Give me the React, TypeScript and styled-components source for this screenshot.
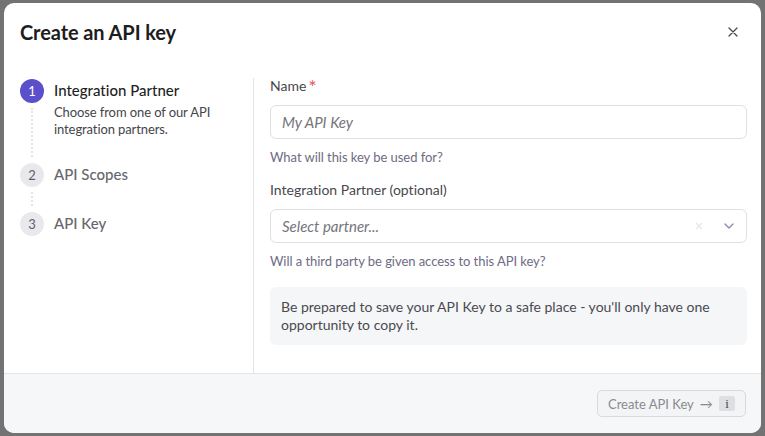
import React from 'react';
import styled, { createGlobalStyle } from 'styled-components';

const GlobalStyle = createGlobalStyle`
  html, body {
    margin: 0;
    padding: 0;
    background: #737373;
  }
  body {
    font-family: Lato, "Noto Sans", sans-serif;
    font-variant-ligatures: none;
    -webkit-font-smoothing: antialiased;
  }
`;

const STEPS = [
    { title: 'Integration Partner', description: 'Choose from one of our API integration partners.' },
    { title: 'API Scopes' },
    { title: 'API Key' },
];

const Backdrop = styled.div`
  width: 765px;
  height: 436px;
  display: flex;
  padding: 3px 4px 3px 4px;
  box-sizing: border-box;
  background: #737373;
`;

const Modal = styled.div`
  width: 757px;
  height: 430px;
  background: #fff;
  border-radius: 10px;
  overflow: hidden;
  display: flex;
  flex-direction: column;
`;

const Header = styled.div`
  height: 58px;
  padding: 0 23px 0 16px;
  display: flex;
  align-items: center;
  justify-content: space-between;
`;

const Title = styled.h2`
  margin: 0;
  font-size: 20px;
  font-weight: 700;
  color: #1d1d21;
  letter-spacing: -0.1px;
`;

const CloseButton = styled.button`
  border: 0;
  background: none;
  padding: 0;
  width: 11px;
  height: 11px;
  display: flex;
  align-items: center;
  justify-content: center;
  color: #4a4a4f;
  cursor: pointer;
`;

const Body = styled.div`
  flex: 1;
  display: flex;
  margin-top: 17px;
`;

const StepsColumn = styled.div`
  width: 250px;
  border-right: 1px solid #e4e4e8;
  padding: 1px 16px 0 16px;
  box-sizing: border-box;
  display: flex;
  flex-direction: column;
`;

const StepRow = styled.div<{ last?: boolean }>`
  display: flex;
  gap: 10px;
  min-height: ${({ last }) => last ? 'auto' : '49px'};
`;

const Marker = styled.div`
  width: 24px;
  display: flex;
  flex-direction: column;
  align-items: center;
`;

const Circle = styled.div<{ active?: boolean }>`
  width: 24px;
  height: 24px;
  border-radius: 50%;
  flex-shrink: 0;
  display: flex;
  align-items: center;
  justify-content: center;
  font-size: 13px;
  background: ${({ active }) => active ? '#5b4fcb' : '#e9e9ed'};
  color: ${({ active }) => active ? '#fff' : '#5f5f66'};
`;

const Connector = styled.div`
  flex: 1;
  margin: 5px 0 6px;
  border-left: 2px dotted #e4e4e8;
`;

const StepText = styled.div<{ last?: boolean }>`
  padding-bottom: ${({ last }) => last ? '0' : '25px'};
`;

const StepTitle = styled.div<{ active?: boolean }>`
  font-size: 15px;
  line-height: 20px;
  height: 20px;
  margin-top: 1px;
  font-weight: 500;
  color: ${({ active }) => active ? '#1f1f24' : '#66666c'};
`;

const StepDescription = styled.div`
  margin-top: 4px;
  font-size: 13px;
  line-height: 17px;
  color: #45454b;
  letter-spacing: -0.1px;
`;

const Form = styled.div`
  flex: 1;
  padding: 0 14px 0 16px;
  display: flex;
  flex-direction: column;
`;

const Label = styled.label<{ spaced?: boolean }>`
  display: block;
  font-size: 14px;
  line-height: 16px;
  color: #48484e;
  margin-top: ${({ spaced }) => spaced ? '16px' : '0'};
`;

const Required = styled.span`
  display: inline-block;
  vertical-align: top;
  color: #e85a5e;
  font-size: 20px;
  line-height: 16px;
  margin-left: 2px;
  position: relative;
  top: 0;
`;

const Field = styled.div`
  margin-top: 11px;
  height: 34px;
  border: 1px solid #dfdfe3;
  border-radius: 6px;
  box-sizing: border-box;
  display: flex;
  align-items: center;
  padding: 0 12px 0 11px;
`;

const Input = styled.input`
  flex: 1;
  border: 0;
  outline: none;
  padding: 0;
  font-family: inherit;
  font-size: 15px;
  font-style: italic;
  color: #222;
  background: transparent;
  &::placeholder {
    color: #75757b;
  }
`;

const Placeholder = styled.span`
  flex: 1;
  font-size: 15px;
  font-style: italic;
  color: #75757b;
`;

const SelectIcons = styled.div`
  display: flex;
  align-items: center;
  gap: 21px;
`;

const Help = styled.div`
  margin-top: 9px;
  font-size: 13px;
  line-height: 18px;
  color: #6e6b82;
  letter-spacing: -0.05px;
`;

const Notice = styled.div`
  margin-top: 17px;
  background: #f5f6f8;
  border-radius: 6px;
  padding: 11px 11px;
  font-size: 14px;
  line-height: 18px;
  color: #4a4a50;
`;

const Footer = styled.div`
  height: 60px;
  border-top: 1px solid #e4e4e8;
  background: #f6f7f9;
  display: flex;
  align-items: center;
  justify-content: flex-end;
  padding: 0 15px;
  box-sizing: border-box;
`;

const SubmitButton = styled.button`
  height: 27px;
  width: 149px;
  border: 1px solid #d9d9de;
  border-radius: 5px;
  background: #f3f4f6;
  display: flex;
  align-items: center;
  padding: 0 10px 0 10px;
  box-sizing: border-box;
  font-family: inherit;
  font-size: 13px;
  color: #8a8a90;
`;

const Arrow = styled.span`
  margin-left: 6px;
  flex: 1;
  text-align: left;
`;

const Kbd = styled.span`
  background: #dedfe2;
  border-radius: 2px;
  width: 16px;
  height: 15px;
  display: flex;
  align-items: center;
  justify-content: center;
  font-family: "Liberation Serif", serif;
  font-size: 13px;
  color: #4a4a50;
`;

const App = () => {
    return (
        <>
            <GlobalStyle/>
            <Backdrop>
                <Modal>
                    <Header>
                        <Title>Create an API key</Title>
                        <CloseButton aria-label="Close">
                            <svg width="10" height="10" viewBox="0 0 10 10">
                                <path d="M1 1 L9 9 M9 1 L1 9" stroke="currentColor" strokeWidth="1.3" strokeLinecap="round"/>
                            </svg>
                        </CloseButton>
                    </Header>
                    <Body>
                        <StepsColumn>
                            {STEPS.map((step, index) => {
                                const last = index === STEPS.length - 1;
                                const active = index === 0;
                                return (
                                    <StepRow key={step.title} last={last}>
                                        <Marker>
                                            <Circle active={active}>{index + 1}</Circle>
                                            {!last && <Connector/>}
                                        </Marker>
                                        <StepText last={last}>
                                            <StepTitle active={active}>{step.title}</StepTitle>
                                            {step.description && <StepDescription>{step.description}</StepDescription>}
                                        </StepText>
                                    </StepRow>
                                );
                            })}
                        </StepsColumn>
                        <Form>
                            <Label>Name<Required>*</Required></Label>
                            <Field>
                                <Input placeholder="My API Key"/>
                            </Field>
                            <Help>What will this key be used for?</Help>

                            <Label spaced>Integration Partner (optional)</Label>
                            <Field>
                                <Placeholder>Select partner...</Placeholder>
                                <SelectIcons>
                                    <svg width="8" height="8" viewBox="0 0 8 8">
                                        <path d="M1 1 L7 7 M7 1 L1 7" stroke="#e6e6ea" strokeWidth="1.2"/>
                                    </svg>
                                    <svg width="10" height="6" viewBox="0 0 10 6">
                                        <path d="M1 1 L5 5 L9 1" fill="none" stroke="#8a85ad" strokeWidth="1.3" strokeLinecap="round" strokeLinejoin="round"/>
                                    </svg>
                                </SelectIcons>
                            </Field>
                            <Help>Will a third party be given access to this API key?</Help>

                            <Notice>
                                Be prepared to save your API Key to a safe place - you'll only have one opportunity to copy it.
                            </Notice>
                        </Form>
                    </Body>
                    <Footer>
                        <SubmitButton>
                            <span>Create API Key</span>
                            <Arrow>→</Arrow>
                            <Kbd>i</Kbd>
                        </SubmitButton>
                    </Footer>
                </Modal>
            </Backdrop>
        </>
    );
};

export default App;
